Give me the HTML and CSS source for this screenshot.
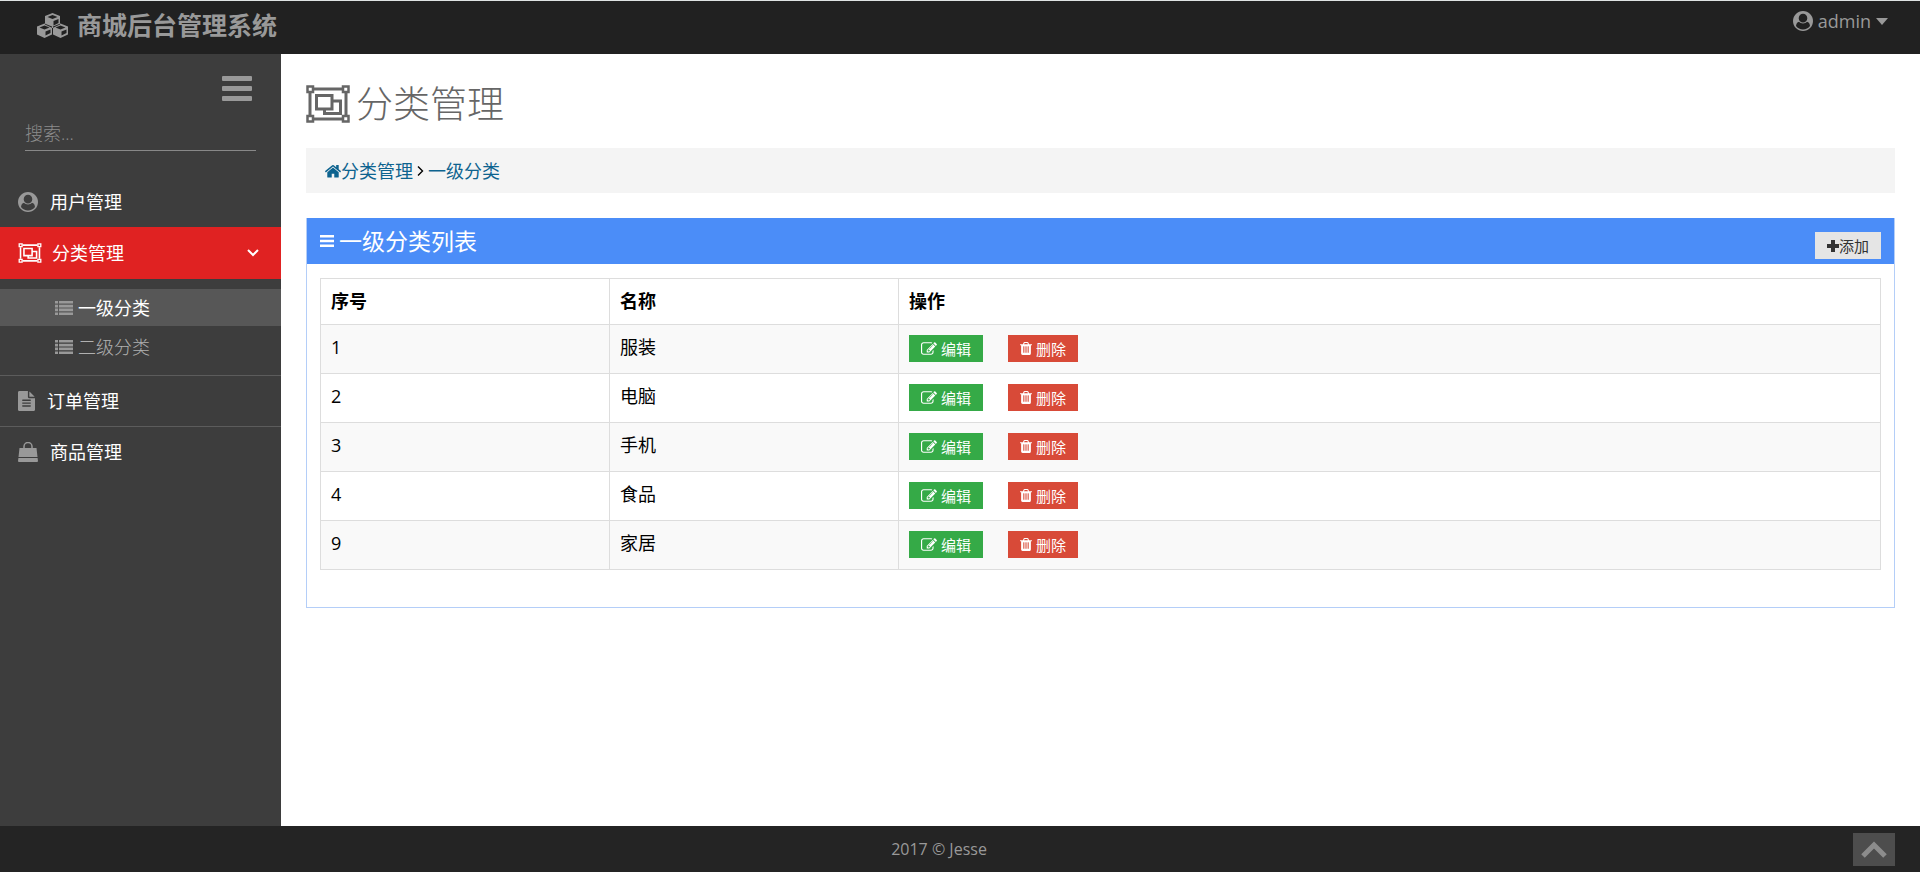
FILE: index.html
```html
<!DOCTYPE html>
<html lang="zh-CN">
<head>
<meta charset="utf-8">
<meta name="viewport" content="width=device-width, initial-scale=1">
<title>商城后台管理系统</title>
<link rel="stylesheet" href="styles.css">
</head>
<body>
<svg class="sprite" aria-hidden="true">
  <symbol id="i-user" viewBox="0 0 1792 1792"><path d="M1523 1339q-22-155-87.500-257.500t-184.500-118.500q-67 74-159.500 115.500t-195.500 41.500-195.500-41.500-159.500-115.500q-119 16-184.500 118.500t-87.500 257.500q106 150 271 237.500t356 87.500 356-87.500 271-237.500zm-243-699q0-159-112.500-271.500t-271.500-112.500-271.500 112.500-112.500 271.500 112.500 271.500 271.500 112.500 271.500-112.500 112.500-271.500zm512 256q0 182-71 347.500t-190.500 286-285.500 191.500-349 71q-182 0-348-71t-286-191-191-286-71-348 71-348 191-286 286-191 348-71 348 71 286 191 191 286 71 348z"/></symbol>
  <symbol id="i-group" viewBox="0 0 44 38"><g fill="none" stroke="currentColor" stroke-width="3"><path d="M8 4H36M8 34H36M4 8V30M40 8V30"/><path stroke-width="2.500" d="M1.500 1.500h5.500v5.500h-5.500zM37 1.500h5.500v5.500h-5.500zM1.500 31h5.500v5.500h-5.500zM37 31h5.500v5.500h-5.500z"/><path d="M10.500 10.500h15.500v13.500h-15.500zM26 16h8.500v12.500h-16v-4.500"/></g></symbol>
  <symbol id="i-cubes" viewBox="0 0 62 50"><path fill-rule="evenodd" d="M31 0l15 6v17l-15 7-15-7V6zM31 4l-10 4 10 4 10-4zM33 16v9l10-5v-8zM15 21l15 6v16l-15 7-15-7V27zM15 25L5 29l10 4 10-4zM17 37v8l10-5v-7zM47 21l15 6v16l-15 7-15-7V27zM47 25l-10 4 10 4 10-4zM49 37v8l10-5v-7z"/></symbol>
  <symbol id="i-bars" viewBox="0 0 30 26"><rect width="30" height="5" rx="1"/><rect y="10" width="30" height="5" rx="1"/><rect y="20" width="30" height="5" rx="1"/></symbol>
  <symbol id="i-lines" viewBox="0 0 14 12"><path d="M0 0h14v2.500H0zM0 4.750h14v2.500H0zM0 9.500h14v2.500H0z"/></symbol>
  <symbol id="i-list" viewBox="0 0 18 14"><path d="M0 0h3v2.600H0zM4 0h14v2.600H4zM0 3.800h3v2.600H0zM4 3.800h14v2.600H4zM0 7.600h3v2.600H0zM4 7.600h14v2.600H4zM0 11.400h3v2.600H0zM4 11.400h14v2.600H4z"/></symbol>
  <symbol id="i-file" viewBox="128 0 1536 1792"><path d="M1596 476q14 14 28 36h-472v-472q22 14 36 28zm-476 164h544v1056q0 40-28 68t-68 28h-1344q-40 0-68-28t-28-68v-1600q0-40 28-68t68-28h800v544q0 40 28 68t68 28zm160 736v-64q0-14-9-23t-23-9h-704q-14 0-23 9t-9 23v64q0 14 9 23t23 9h704q14 0 23-9t9-23zm0-256v-64q0-14-9-23t-23-9h-704q-14 0-23 9t-9 23v64q0 14 9 23t23 9h704q14 0 23-9t9-23zm0-256v-64q0-14-9-23t-23-9h-704q-14 0-23 9t-9 23v64q0 14 9 23t23 9h704q14 0 23-9t9-23z"/></symbol>
  <symbol id="i-bag" viewBox="0 0 20 20"><path d="M1.500 6h17l1 9H.500zM.400 16h19.200l.400 3q0 1-1 1H1q-1 0-1-1z"/><path fill="none" stroke="currentColor" stroke-width="1.500" d="M6 9V4.500a4 4 0 0 1 8 0V9"/></symbol>
  <symbol id="i-home" viewBox="89 200 1614 1336"><path d="M1472 992v480q0 26-19 45t-45 19h-384v-384h-256v384h-384q-26 0-45-19t-19-45v-480q0-1 .500-3t.500-3l575-474 575 474q1 2 1 6zm223-69l-62 74q-8 9-21 11h-3q-13 0-21-7l-692-577-692 577q-12 8-24 7-13-2-21-11l-62-74q-8-10-7-23.500t11-21.500l719-599q32-26 76-26t76 26l244 204v-195q0-14 9-23t23-9h192q14 0 23 9t9 23v408l219 182q10 8 11 21.500t-7 23.500z"/></symbol>
  <symbol id="i-edit" viewBox="0 128 1792 1408"><path d="M888 1184l116-116-152-152-116 116v56h96v96h56zm440-720q-16-16-33 1l-350 350q-17 17-1 33t33-1l350-350q17-17 1-33zm80 594v190q0 119-84.500 203.500t-203.500 84.500h-832q-119 0-203.500-84.500t-84.500-203.500v-832q0-119 84.500-203.500t203.500-84.500h832q63 0 117 25 15 7 18 23 3 17-9 29l-49 49q-14 14-32 8-23-6-45-6h-832q-66 0-113 47t-47 113v832q0 66 47 113t113 47h832q66 0 113-47t47-113v-126q0-13 9-22l64-64q15-15 35-7t20 29zm-96-738l288 288-672 672h-288v-288zm444 132l-92 92-288-288 92-92q28-28 68-28t68 28l152 152q28 28 28 68t-28 68z"/></symbol>
  <symbol id="i-trash" viewBox="192 128 1408 1536"><path d="M704 1376v-704q0-14-9-23t-23-9h-64q-14 0-23 9t-9 23v704q0 14 9 23t23 9h64q14 0 23-9t9-23zm256 0v-704q0-14-9-23t-23-9h-64q-14 0-23 9t-9 23v704q0 14 9 23t23 9h64q14 0 23-9t9-23zm256 0v-704q0-14-9-23t-23-9h-64q-14 0-23 9t-9 23v704q0 14 9 23t23 9h64q14 0 23-9t9-23zm-544-992h448l-48-117q-7-9-17-11h-317q-10 2-17 11zm928 32v64q0 14-9 23t-23 9h-96v948q0 83-47 143.500t-113 60.500h-832q-66 0-113-58.500t-47-141.500v-952h-96q-14 0-23-9t-9-23v-64q0-14 9-23t23-9h309l70-167q15-37 54-63t79-26h320q40 0 79 26t54 63l70 167h309q14 0 23 9t9 23z"/></symbol>
  <symbol id="i-plus" viewBox="0 0 12 12"><path d="M4 0h4v4h4v4H8v4H4V8H0V4h4z"/></symbol>
  <symbol id="i-down" viewBox="0 0 12 8"><path fill="none" stroke="currentColor" stroke-width="2" d="M1 1l5 5 5-5"/></symbol>
  <symbol id="i-right" viewBox="0 0 7 10"><path fill="none" stroke="currentColor" stroke-width="1.400" d="M1 .500L5.500 5 1 9.500"/></symbol>
  <symbol id="i-caret" viewBox="0 0 12 7"><path d="M0 0h12L6 7z"/></symbol>
  <symbol id="i-up" viewBox="0 0 26 17"><path fill="none" stroke="currentColor" stroke-width="5" d="M2 15L13 4l11 11"/></symbol>
</svg>

<header class="topbar">
  <a class="brand" href="#"><svg class="icon brand-icon"><use href="#i-cubes"/></svg>商城后台管理系统</a>
  <button class="account" type="button"><svg class="icon icon-20"><use href="#i-user"/></svg><span>admin</span><svg class="icon caret"><use href="#i-caret"/></svg></button>
</header>

<div class="layout">
  <aside class="sidebar">
    <button class="toggle" type="button" aria-label="菜单"><svg class="icon toggle-icon"><use href="#i-bars"/></svg></button>
    <form class="search"><input class="search-input" type="text" placeholder="搜索..." aria-label="搜索"></form>
    <nav>
      <ul class="menu">
        <li><a class="menu-link" href="#"><svg class="icon icon-20"><use href="#i-user"/></svg>用户管理</a></li>
        <li>
          <a class="menu-link menu-link-active" href="#"><svg class="icon icon-group"><use href="#i-group"/></svg>分类管理<svg class="icon arrow"><use href="#i-down"/></svg></a>
          <ul class="submenu">
            <li><a class="sub-link sub-link-active" href="#"><svg class="icon icon-list"><use href="#i-list"/></svg>一级分类</a></li>
            <li><a class="sub-link" href="#"><svg class="icon icon-list"><use href="#i-list"/></svg>二级分类</a></li>
          </ul>
        </li>
        <li class="divided"><a class="menu-link" href="#"><svg class="icon icon-file"><use href="#i-file"/></svg>订单管理</a></li>
        <li class="divided"><a class="menu-link" href="#"><svg class="icon icon-20"><use href="#i-bag"/></svg>商品管理</a></li>
      </ul>
    </nav>
  </aside>

  <main class="content">
    <h1 class="page-title"><svg class="icon title-icon"><use href="#i-group"/></svg>分类管理</h1>
    <nav class="breadcrumb" aria-label="位置">
      <a class="crumb" href="#"><svg class="icon icon-home"><use href="#i-home"/></svg>分类管理</a>
      <svg class="icon crumb-sep"><use href="#i-right"/></svg>
      <a class="crumb" href="#">一级分类</a>
    </nav>
    <section class="panel">
      <div class="panel-head">
        <h2 class="panel-title"><svg class="icon icon-lines"><use href="#i-lines"/></svg>一级分类列表</h2>
        <button class="btn btn-add" type="button"><svg class="icon icon-plus"><use href="#i-plus"/></svg>添加</button>
      </div>
      <div class="panel-body">
        <table class="table">
          <colgroup><col class="col-narrow"><col class="col-narrow"><col></colgroup>
          <thead><tr><th>序号</th><th>名称</th><th>操作</th></tr></thead>
          <tbody>
            <tr><td>1</td><td>服装</td><td><div class="actions"><button class="btn btn-edit" type="button"><svg class="icon icon-edit"><use href="#i-edit"/></svg>编辑</button><button class="btn btn-delete" type="button"><svg class="icon icon-trash"><use href="#i-trash"/></svg>删除</button></div></td></tr>
            <tr><td>2</td><td>电脑</td><td><div class="actions"><button class="btn btn-edit" type="button"><svg class="icon icon-edit"><use href="#i-edit"/></svg>编辑</button><button class="btn btn-delete" type="button"><svg class="icon icon-trash"><use href="#i-trash"/></svg>删除</button></div></td></tr>
            <tr><td>3</td><td>手机</td><td><div class="actions"><button class="btn btn-edit" type="button"><svg class="icon icon-edit"><use href="#i-edit"/></svg>编辑</button><button class="btn btn-delete" type="button"><svg class="icon icon-trash"><use href="#i-trash"/></svg>删除</button></div></td></tr>
            <tr><td>4</td><td>食品</td><td><div class="actions"><button class="btn btn-edit" type="button"><svg class="icon icon-edit"><use href="#i-edit"/></svg>编辑</button><button class="btn btn-delete" type="button"><svg class="icon icon-trash"><use href="#i-trash"/></svg>删除</button></div></td></tr>
            <tr><td>9</td><td>家居</td><td><div class="actions"><button class="btn btn-edit" type="button"><svg class="icon icon-edit"><use href="#i-edit"/></svg>编辑</button><button class="btn btn-delete" type="button"><svg class="icon icon-trash"><use href="#i-trash"/></svg>删除</button></div></td></tr>
          </tbody>
        </table>
      </div>
    </section>
  </main>
</div>

<footer class="footer">
  <span class="copyright">2017 © Jesse</span>
  <a class="to-top" href="#" aria-label="返回顶部"><svg class="icon up-icon"><use href="#i-up"/></svg></a>
</footer>
</body>
</html>
```
FILE: styles.css
```css
* { box-sizing: border-box; }

body {
  margin: 0;
  min-height: 100vh;
  display: flex;
  flex-direction: column;
  background: #fff;
  color: #000;
  font-family: "Open Sans", "Noto Sans CJK SC", sans-serif;
  font-size: 18px;
  font-weight: 400;
  line-height: 24px;
}

a { color: inherit; text-decoration: none; }
ul { margin: 0; padding: 0; list-style: none; }
button, input { font: inherit; border: 0; border-radius: 0; }
button { cursor: pointer; }

.sprite { position: absolute; width: 0; height: 0; }
.icon { display: block; flex: none; fill: currentColor; }
.icon-20 { width: 20px; height: 20px; }

.topbar {
  display: flex;
  justify-content: space-between;
  align-items: flex-start;
  height: 54px;
  padding: 0 32px 0 37px;
  border-top: 1px solid #dfe3e3;
  background: #212121;
  color: #999;
}
.brand {
  display: flex;
  align-items: center;
  gap: 9px;
  height: 48px;
  font-size: 25px;
  font-weight: 700;
}
.brand-icon { width: 31px; height: 25px; }
.account {
  display: flex;
  align-items: center;
  gap: 5px;
  height: 40px;
  padding: 0;
  background: none;
  color: #999;
}
.caret { width: 12px; height: 7px; }

.layout { display: flex; flex: 1; }

.sidebar {
  flex: none;
  width: 281px;
  background: #3d3d3d;
  color: #fff;
}
.toggle {
  display: block;
  margin: 22px 29px 0 auto;
  padding: 0;
  background: none;
  color: #999;
}
.toggle-icon { width: 30px; height: 26px; }
.search { padding: 14px 25px 24px; }
.search-input {
  display: block;
  width: 100%;
  height: 35px;
  padding: 0;
  border-bottom: 1px solid #888;
  background: none;
  color: #ccc;
  outline: 0;
  font-weight: 300;
}
.search-input::placeholder { color: #8c8c8c; opacity: 1; }

.menu { padding-top: 1px; }
.menu-link {
  display: flex;
  align-items: center;
  height: 51px;
  gap: 12px;
  padding: 0 22px 0 18px;
}
.menu-link .icon { color: #999; }
.menu-link-active { height: 52px; gap: 10px; background: #e02222; }
.menu-link-active .icon { color: #fff; }
.icon-group { width: 24px; height: 20px; }
.icon-file { width: 17px; height: 20px; }
.arrow { width: 12px; height: 8px; margin-left: auto; }
.divided { border-top: 1px solid #5c5c5c; }
.divided .menu-link { height: 50px; }
.submenu { display: grid; gap: 2px; padding: 10px 0; }
.sub-link {
  display: flex;
  align-items: center;
  gap: 5px;
  height: 37px;
  padding-left: 55px;
  color: #b0b0b0;
  font-weight: 300;
}
.sub-link .icon { color: #999; }
.sub-link-active { background: #575757; color: #fff; font-weight: 400; }
.icon-list { width: 18px; height: 14px; }

.content { flex: 1; min-width: 0; padding: 25px; }
.page-title {
  display: flex;
  align-items: center;
  gap: 6px;
  height: 50px;
  margin: 0 0 19px;
  color: #666;
  font-size: 37px;
  font-weight: 300;
}
.title-icon { width: 44px; height: 38px; }

.breadcrumb {
  display: flex;
  align-items: center;
  gap: 4px;
  height: 45px;
  margin-bottom: 25px;
  padding: 0 19px;
  background: #f4f4f4;
}
.crumb { display: flex; align-items: center; color: #0d638f; }
.icon-home { width: 16px; height: 14px; }
.crumb-sep { width: 7px; height: 10px; }

.panel { border: 1px solid #b4cef8; border-top: 0; }
.panel-head {
  display: flex;
  justify-content: space-between;
  align-items: center;
  height: 46px;
  padding: 0 13px;
  background: #4b8df8;
}
.panel-title {
  display: flex;
  align-items: center;
  gap: 5px;
  margin: 0;
  color: #fff;
  font-size: 23px;
  font-weight: 400;
}
.icon-lines { width: 14px; height: 12px; }
.panel-body { padding: 14px 13px 37px; }

.btn {
  display: flex;
  align-items: center;
  gap: 4px;
  height: 27px;
  padding: 0 12px;
  color: #fff;
  font-size: 15px;
}
.btn-add {
  align-self: flex-end;
  gap: 0;
  margin-bottom: 5px;
  background: #e5e5e5;
  color: #333;
}
.btn-edit { background: #35aa47; }
.btn-delete { background: #d84a38; }
.icon-plus { width: 12px; height: 12px; }
.icon-edit { width: 16px; height: 13px; }
.icon-trash { width: 12px; height: 13px; }

.table { width: 100%; border-collapse: collapse; table-layout: fixed; }
.col-narrow { width: 289px; }
.table th, .table td {
  padding: 10px;
  border: 1px solid #ddd;
  text-align: left;
  vertical-align: top;
}
.table th { height: 46px; font-weight: 700; }
.table td { height: 49px; }
.table tbody tr:nth-child(odd) { background: #f9f9f9; }
.actions { display: flex; gap: 25px; }

.footer {
  display: flex;
  align-items: center;
  height: 46px;
  padding: 0 25px;
  background: #242424;
  color: #999;
  font-size: 16px;
}
.copyright { flex: 1; text-align: center; }
.to-top {
  display: flex;
  align-items: center;
  justify-content: center;
  width: 42px;
  height: 33px;
  background: #4d4d4d;
  color: #8c8c8c;
}
.up-icon { width: 26px; height: 17px; }
```
